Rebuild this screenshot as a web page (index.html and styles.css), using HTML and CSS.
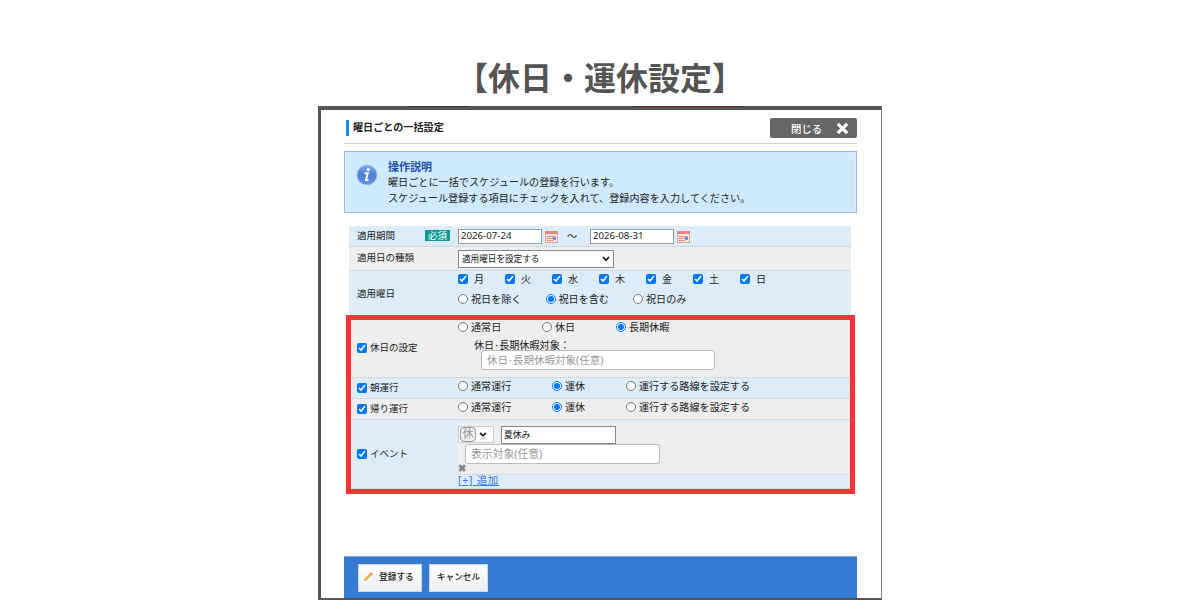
FILE: index.html
```html
<!DOCTYPE html>
<html lang="ja">
    <head>
        <meta charset="UTF-8">
        <title>休日・運休設定</title>
        <link rel="stylesheet" href="styles.css">
    </head>
    <body>
        <h1>【休日・運休設定】</h1>

        <div class="window">
            <div class="header">
                <h2>曜日ごとの一括設定</h2>
                <button class="close">閉じる
                    <svg width="13" height="13" viewBox="0 0 13 13"><path d="M1.8 1.8L11.2 11.2M11.2 1.8L1.8 11.2" stroke="#fff" stroke-width="3.2"/></svg>
                </button>
            </div>

            <div class="info">
                <svg class="info-icon" width="22" height="22" viewBox="0 0 22 22">
                    <defs>
                        <linearGradient id="ball" x1="0" y1="0" x2="0" y2="1">
                            <stop offset="0" stop-color="#7eabe8"/>
                            <stop offset="0.5" stop-color="#4c80d2"/>
                            <stop offset="1" stop-color="#5d96e4"/>
                        </linearGradient>
                    </defs>
                    <circle cx="11" cy="11" r="10" fill="url(#ball)" stroke="#a3bfe6"/>
                    <circle cx="12.4" cy="5.6" r="1.6" fill="#fff"/>
                    <path d="M8.6 9.2h3.2l-1.8 6.8h2.4" fill="none" stroke="#fff" stroke-width="1.9"/>
                </svg>
                <div>
                    <h3>操作説明</h3>
                    <p>曜日ごとに一括でスケジュールの登録を行います。</p>
                    <p>スケジュール登録する項目にチェックを入れて、登録内容を入力してください。</p>
                </div>
            </div>

            <div class="form">
                <div class="row period">
                    <div class="name">適用期間 <span class="required">必須</span></div>
                    <div class="value">
                        <input class="date" type="text" value="2026-07-24">
                        <svg class="calendar" width="13" height="12" viewBox="0 0 13 12">
                            <rect x="0.5" y="0.5" width="12" height="11" fill="#fbe3df" stroke="#dda39b"/>
                            <path d="M0 0h13v3H0z" fill="#e38a7d"/>
                            <path d="M2 5.5h9M2 7.5h9M2 9.5h6" stroke="#d9695f" stroke-dasharray="1.5 .8"/>
                            <path d="M8 6h3v3H8z" fill="#6a93dc"/>
                        </svg>
                        <span class="tilde">～</span>
                        <input class="date" type="text" value="2026-08-31">
                        <svg class="calendar" width="13" height="12" viewBox="0 0 13 12">
                            <rect x="0.5" y="0.5" width="12" height="11" fill="#fbe3df" stroke="#dda39b"/>
                            <path d="M0 0h13v3H0z" fill="#e38a7d"/>
                            <path d="M2 5.5h9M2 7.5h9M2 9.5h6" stroke="#d9695f" stroke-dasharray="1.5 .8"/>
                            <path d="M8 6h3v3H8z" fill="#6a93dc"/>
                        </svg>
                    </div>
                </div>

                <div class="row kind gray">
                    <div class="name">適用日の種類</div>
                    <div class="value">
                        <div class="select">適用曜日を設定する
                            <svg width="8" height="6" viewBox="0 0 8 6"><path d="M1 1l3 3.3L7 1" fill="none" stroke="#111" stroke-width="1.6"/></svg>
                        </div>
                    </div>
                </div>

                <div class="row week">
                    <div class="name">適用曜日</div>
                    <div class="value">
                        <div class="choices days">
                            <label><input type="checkbox" checked>月</label>
                            <label><input type="checkbox" checked>火</label>
                            <label><input type="checkbox" checked>水</label>
                            <label><input type="checkbox" checked>木</label>
                            <label><input type="checkbox" checked>金</label>
                            <label><input type="checkbox" checked>土</label>
                            <label><input type="checkbox" checked>日</label>
                        </div>
                        <div class="choices holidays">
                            <label><input type="radio" name="holiday">祝日を除く</label>
                            <label><input type="radio" name="holiday" checked>祝日を含む</label>
                            <label><input type="radio" name="holiday">祝日のみ</label>
                        </div>
                    </div>
                </div>

                <div class="row dayoff gray">
                    <div class="name"><input type="checkbox" checked>休日の設定</div>
                    <div class="value">
                        <div class="choices">
                            <label><input type="radio" name="dayoff">通常日</label>
                            <label><input type="radio" name="dayoff">休日</label>
                            <label><input type="radio" name="dayoff" checked>長期休暇</label>
                        </div>
                        <p class="target">休日<span class="dot">·</span>長期休暇対象：</p>
                        <div class="field">休日<span class="dot">·</span>長期休暇対象(任意)</div>
                    </div>
                </div>

                <div class="row run">
                    <div class="name"><input type="checkbox" checked>朝運行</div>
                    <div class="value choices">
                        <label><input type="radio" name="morning">通常運行</label>
                        <label><input type="radio" name="morning" checked>運休</label>
                        <label><input type="radio" name="morning">運行する路線を設定する</label>
                    </div>
                </div>

                <div class="row run gray">
                    <div class="name"><input type="checkbox" checked>帰り運行</div>
                    <div class="value choices">
                        <label><input type="radio" name="return">通常運行</label>
                        <label><input type="radio" name="return" checked>運休</label>
                        <label><input type="radio" name="return">運行する路線を設定する</label>
                    </div>
                </div>

                <div class="row event">
                    <div class="name"><input type="checkbox" checked>イベント</div>
                    <div class="value">
                        <div class="event-item">
                            <div class="event-line">
                                <div class="mark"><span>休</span>
                                    <svg width="8" height="8" viewBox="0 0 8 8"><path d="M1 2l3 2.6L7 2" fill="none" stroke="#222" stroke-width="1.7"/><path d="M2 7h4" stroke="#aaa"/></svg>
                                </div>
                                <input class="event-name" type="text" value="夏休み">
                            </div>
                            <div class="field">表示対象(任意)</div>
                            <svg class="remove" width="9" height="9" viewBox="0 0 9 9"><path d="M1.3 1.3l5.6 5.6M6.9 1.3L1.3 6.9" stroke="#858585" stroke-width="2.8"/></svg>
                        </div>
                        <a href="#">[+] 追加</a>
                    </div>
                </div>

                <div class="highlight"></div>
            </div>

            <div class="footer">
                <button>
                    <svg width="11" height="11" viewBox="0 0 11 11"><path d="M1 10l1-3 6-6 2 2-6 6z" fill="#f6b455"/><path d="M7.2 1.8L8 1l2 2-.8.8z" fill="#eb9d67"/><path d="M1 10l.7-2 1.4 1.3z" fill="#b58a58"/></svg>
                    登録する</button>
                <button>キャンセル</button>
            </div>
        </div>
    </body>
</html>
```

FILE: styles.css
```css
* {
    box-sizing: border-box;
}

body {
    margin: 0;
    height: 600px;
    overflow: hidden;
    background: white;
    color: #222;
    font-family: "Noto Sans", "Noto Sans CJK JP", sans-serif;
    font-size: 10.1px;
    line-height: 14px;
}

h1, h2, h3, p {
    margin: 0;
}

h1 {
    height: 106px;
    padding-top: 52px;
    text-align: center;
    color: #545454;
    font: bold 32px/48px "Noto Sans CJK JP", sans-serif;
}

button {
    font-family: inherit;
    padding: 0;
}

.window {
    position: relative;
    width: 564px;
    height: 494px;
    margin: 0 auto;
    padding: 0 24px 0 23px;
    border: solid #555;
    border-width: 4px 1px 2px 3px;
    border-right-color: #808080;
    display: flex;
    flex-direction: column;
}

/* Dimmed text of the page behind, on the top edge */
.window::before {
    content: "";
    position: absolute;
    left: 86px;
    top: -4px;
    width: 339px;
    height: 1px;
    background: linear-gradient(90deg, #3c3c3c 62px, transparent 62px, transparent 225px, #6b302c 225px);
}

/* Title line */
.header {
    height: 34px;
    padding-top: 8px;
    border-bottom: 1px solid #d0d0d0;
    display: flex;
    justify-content: space-between;
}

h2 {
    height: 16px;
    margin: 2px 0 0 2px;
    padding-left: 4px;
    border-left: 3px solid #1c8df0;
    font-size: 10.1px;
    line-height: 15px;
}

.close {
    width: 87px;
    height: 20px;
    padding: 0 8px 0 21px;
    border: none;
    border-radius: 2px;
    background: #666;
    color: white;
    font-size: 10.4px;
    font-weight: 500;
    display: flex;
    align-items: center;
    justify-content: space-between;
}

/* Explanation box */
.info {
    height: 62px;
    margin-top: 7px;
    padding: 7px 12px;
    border: 1px solid #98b8e9;
    box-shadow: inset 0 0 0 1px #dcecff;
    background: #cfe9fd;
    font-size: 10.15px;
    line-height: 15.5px;
    display: flex;
    gap: 9px;
}

.info-icon {
    margin: 5px 1px 0 -1px;
}

h3 {
    color: #2451a8;
    font-size: 11px;
    line-height: 16px;
}

/* Form table */
.form {
    position: relative;
    margin: 13px 6px 0 5px;
}

.row {
    display: flex;
    background: #dcecf9;
    border-bottom: 1px dotted #bdc6ce;
}

.row.gray {
    background: #eee;
}

.name {
    width: 109px;
    padding: 0 8px;
    font-size: 9.5px;
    display: flex;
    align-items: center;
}

.value {
    flex: 1;
}

input[type=checkbox], input[type=radio] {
    width: 10px;
    height: 10px;
    margin: 0;
    flex: none;
}

.name input[type=checkbox] {
    margin-right: 3px;
}

.required {
    width: 25px;
    height: 11px;
    margin-left: auto;
    background: #109a95;
    color: white;
    font-size: 9.5px;
    line-height: 11px;
    text-align: center;
}

.period {
    height: 21px;
}

.period .value {
    display: flex;
    align-items: center;
}

.date {
    width: 84px;
    height: 15px;
    padding: 0 2px 1px;
    border: 1px solid #999;
    color: #222;
    font: 9.7px "Noto Sans", sans-serif;
}

.calendar {
    margin: 2px 0 0 3px;
}

.period .name, .kind .name {
    padding-bottom: 1px;
}

.tilde {
    width: 32px;
    text-align: center;
    padding-right: 4px;
}

.kind {
    height: 24px;
}

.kind .value {
    padding-top: 3px;
}

.select {
    width: 156px;
    height: 18px;
    padding: 0 3px 1px;
    border: 1px solid #888;
    background: white;
    color: #111;
    font-size: 8.6px;
    display: flex;
    align-items: center;
    justify-content: space-between;
}

.choices {
    display: flex;
}

.choices label {
    display: flex;
    align-items: center;
    gap: 3px;
    height: 14px;
}

.week {
    height: 47px;
}

.days label {
    width: 47px;
    gap: 6px;
}

.week .value {
    padding-top: 1px;
}

.holidays {
    margin-top: 6px;
}

.holidays label {
    width: 87.5px;
}

.dayoff {
    height: 60px;
}

.dayoff .value {
    padding-top: 2px;
}

.dayoff .choices label:nth-child(1) {
    width: 84px;
}

.dayoff .choices label:nth-child(2) {
    width: 74px;
}

.dot {
    display: inline-block;
    width: 5px;
    text-align: center;
}

.target {
    padding-left: 16px;
    margin-top: 4px;
}

.field {
    height: 20px;
    padding: 0 5px;
    border: 1px solid #bbb;
    border-radius: 3px;
    background: white;
    color: #999;
    font-size: 10.5px;
    line-height: 18px;
}

.dayoff .field {
    width: 234px;
    margin: -2px 0 0 23px;
}

.run {
    height: 21px;
}

.run .value {
    padding-top: 1px;
}

.run .choices label:nth-child(1) {
    width: 94px;
}

.run .choices label:nth-child(2) {
    width: 74px;
}

/* Event row */
.event {
    height: 69px;
}

.event .value {
    padding-top: 3px;
}

.event-item {
    height: 52px;
    padding-top: 3px;
    background: #eee;
    border-bottom: 1px dotted #bdc6ce;
}

.event-line {
    display: flex;
    gap: 7px;
}

.mark {
    width: 36px;
    height: 17px;
    padding: 0 6px 0 1px;
    border: 1px solid #ccc;
    background: white;
    display: flex;
    align-items: center;
    justify-content: space-between;
}

.mark span {
    width: 16px;
    height: 15px;
    border: 1px solid #999;
    border-radius: 4px;
    background: #eee;
    color: #999;
    font-size: 11px;
    line-height: 12px;
    text-align: center;
}

.event-name {
    width: 114.5px;
    height: 18px;
    padding: 0 2px 1px;
    border: 1px solid #888;
    color: #111;
    font: 8.8px "Noto Sans", "Noto Sans CJK JP", sans-serif;
}

.event .field {
    width: 195px;
    margin-left: 7px;
    font-size: 10.8px;
}

.remove {
    display: block;
}

.event a {
    display: block;
    color: #3478ed;
    font-size: 10.4px;
    letter-spacing: 0.8px;
    line-height: 11px;
}

/* Red frame over the holiday rows */
.highlight {
    position: absolute;
    left: -3px;
    top: 89px;
    width: 509px;
    height: 179px;
    border: 5px solid #ff3131;
}

/* Buttons at the bottom */
.footer {
    height: 42px;
    margin-top: auto;
    padding: 7px 14px;
    border-top: 1px solid #7eabe0;
    background: #377ad1;
    display: flex;
    gap: 7px;
}

.footer button {
    height: 28px;
    padding: 0 7px 3px;
    border: 1px solid #c5d8ef;
    background: linear-gradient(#fff, #eceef1);
    color: #222;
    font-size: 8.7px;
    font-weight: 500;
    display: flex;
    align-items: center;
    gap: 5px;
}

.footer button:first-child {
    padding-left: 4px;
}
```
